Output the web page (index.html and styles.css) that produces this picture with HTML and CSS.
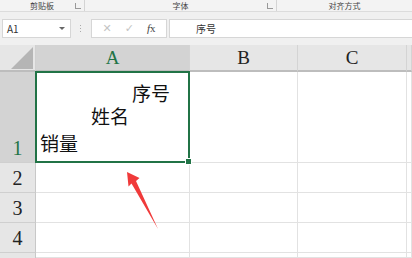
FILE: index.html
```html
<!DOCTYPE html>
<html lang="zh">
  <head>
    <meta charset="UTF-8" />
    <title>Excel</title>
    <link rel="stylesheet" href="styles.css">
  </head>
  <body>
    <!-- 功能区底部分组标签 -->
    <div class="ribbon">
      <div class="group g-clip"><span class="label">剪贴板</span><span class="launcher"></span></div>
      <div class="group g-font"><span class="label">字体</span><span class="launcher"></span></div>
      <div class="group g-align"><span class="label">对齐方式</span></div>
    </div>

    <!-- 编辑栏 -->
    <div class="formula-bar">
      <div class="name-box">
        <span>A1</span>
        <span class="caret"></span>
      </div>
      <div class="dots"><i></i><i></i><i></i></div>
      <div class="fx-buttons">
        <span class="btn">✕</span>
        <span class="btn">✓</span>
        <span class="btn fx"><em>f</em>x</span>
      </div>
      <div class="formula-input">序号</div>
    </div>

    <!-- 表格 -->
    <div class="sheet">
      <div class="corner"><span class="tri"></span></div>
      <div class="col-head active">A</div>
      <div class="col-head">B</div>
      <div class="col-head">C</div>
      <div class="col-head"></div>

      <div class="row-head active">1</div>
      <div class="cell selected">
        <div class="line l1">序号</div>
        <div class="line l2">姓名</div>
        <div class="line l3">销量</div>
        <span class="handle"></span>
      </div>
      <div class="cell"></div>
      <div class="cell"></div>
      <div class="cell"></div>

      <div class="row-head">2</div>
      <div class="cell"></div>
      <div class="cell"></div>
      <div class="cell"></div>
      <div class="cell"></div>

      <div class="row-head">3</div>
      <div class="cell"></div>
      <div class="cell"></div>
      <div class="cell"></div>
      <div class="cell"></div>

      <div class="row-head">4</div>
      <div class="cell"></div>
      <div class="cell"></div>
      <div class="cell"></div>
      <div class="cell"></div>

      <div class="row-head stub"></div>
      <div class="cell"></div>
      <div class="cell"></div>
      <div class="cell"></div>
      <div class="cell"></div>
    </div>

    <!-- 红色箭头标注 -->
    <svg class="arrow" width="412" height="258" viewBox="0 0 412 258">
      <polygon points="127,172 139.5,178 136,181 158,229 131.5,183.5 128.5,186.5" fill="#f03a3a" />
    </svg>
  </body>
</html>
```

FILE: styles.css
```css
body {
  margin: 0;
  width: 412px;
  height: 258px;
  overflow: hidden;
  position: relative;
  background-color: #f0f0f0;
  font-family: "Noto Sans CJK SC", "Noto Sans", sans-serif;
}

.ribbon {
  display: flex;
  height: 11px;
  background-color: #f3f3f3;
  border-bottom: 1px solid #dcdcdc;
  overflow: hidden;
}

.group {
  position: relative;
  display: flex;
  justify-content: center;
  border-right: 1px solid #d4d4d4;
  height: 11px;
}

.g-clip {
  width: 84px;
}

.g-font {
  width: 191px;
}

.g-align {
  flex: 1;
  border-right: none;
}

.label {
  font-size: 8px;
  line-height: 9px;
  padding-top: 1px;
  color: #444;
}

.launcher {
  position: absolute;
  right: 3px;
  top: 3px;
  width: 5px;
  height: 5px;
  border-left: 1px solid #999;
  border-bottom: 1px solid #999;
}

.formula-bar {
  display: flex;
  align-items: center;
  height: 20px;
  margin-top: 6px;
  padding-left: 2px;
}

.name-box {
  display: flex;
  align-items: center;
  justify-content: space-between;
  width: 69px;
  height: 19px;
  padding: 0 5px 0 4px;
  box-sizing: border-box;
  background-color: #fff;
  border: 1px solid #d6d6d6;
  font-size: 10px;
  color: #333;
}

.caret {
  width: 0;
  height: 0;
  border-left: 3px solid transparent;
  border-right: 3px solid transparent;
  border-top: 3px solid #666;
}

.dots {
  display: flex;
  flex-direction: column;
  gap: 2px;
  margin: 0 10px 0 9px;
}

.dots i {
  display: block;
  width: 1px;
  height: 1px;
  background-color: #aaa;
}

.fx-buttons {
  display: flex;
  align-items: center;
  justify-content: space-around;
  width: 76px;
  height: 19px;
  box-sizing: border-box;
  background-color: #fff;
  border: 1px solid #d6d6d6;
  padding: 0 4px;
}

.btn {
  font-family: "DejaVu Sans", sans-serif;
  font-size: 11px;
  color: #c4c4c4;
}

.btn.fx {
  font-family: "Liberation Serif", serif;
  font-size: 11px;
  color: #444;
}

.formula-input {
  flex: 1;
  height: 19px;
  margin-left: 2px;
  padding-left: 26px;
  box-sizing: border-box;
  background-color: #fff;
  border: 1px solid #d6d6d6;
  border-right: none;
  font-size: 10px;
  line-height: 17px;
  color: #333;
}

.sheet {
  display: grid;
  grid-template-columns: 36px 154px 108px 109px 1fr;
  grid-template-rows: 27px 91px 30px 30px 30px 5px;
  margin-top: 7px;
  background-color: #fff;
}

.corner {
  position: relative;
  background-color: #e6e6e6;
  border-right: 1px solid #d0d0d0;
  border-bottom: 2px solid #bdbdbd;
}

.tri {
  position: absolute;
  right: 2px;
  bottom: 1px;
  width: 0;
  height: 0;
  border-left: 22px solid transparent;
  border-bottom: 22px solid #b5b5b5;
}

.col-head {
  display: flex;
  align-items: center;
  justify-content: center;
  background-color: #e6e6e6;
  border-right: 1px solid #d4d4d4;
  border-bottom: 2px solid #bdbdbd;
  font-family: "Liberation Serif", serif;
  font-size: 19px;
  color: #222;
}

.col-head.active {
  background-color: #d3d3d3;
  color: #217346;
}

.row-head {
  display: flex;
  align-items: flex-end;
  justify-content: center;
  padding-bottom: 2px;
  box-sizing: border-box;
  background-color: #e6e6e6;
  border-right: 1px solid #c8c8c8;
  border-bottom: 1px solid #cfcfcf;
  font-family: "Liberation Serif", serif;
  font-size: 20px;
  color: #222;
}

.row-head.active {
  background-color: #d3d3d3;
  color: #217346;
}

.row-head.stub {
  border-bottom: none;
}

.cell {
  border-right: 1px solid #e2e2e2;
  border-bottom: 1px solid #e2e2e2;
}

.cell.selected {
  position: relative;
  border: 2px solid #217346;
  margin: -1px 0 0 -1px;
  font-size: 19px;
  color: #111;
}

.line {
  line-height: 23px;
}

.l1 {
  padding-left: 95px;
  margin-top: 8px;
}

.l2 {
  padding-left: 54px;
}

.l3 {
  padding-left: 3px;
  margin-top: 4px;
}

.handle {
  position: absolute;
  right: -4px;
  bottom: -4px;
  width: 5px;
  height: 5px;
  background-color: #217346;
  border: 1px solid #fff;
}

.arrow {
  position: absolute;
  left: 0;
  top: 0;
}
```
